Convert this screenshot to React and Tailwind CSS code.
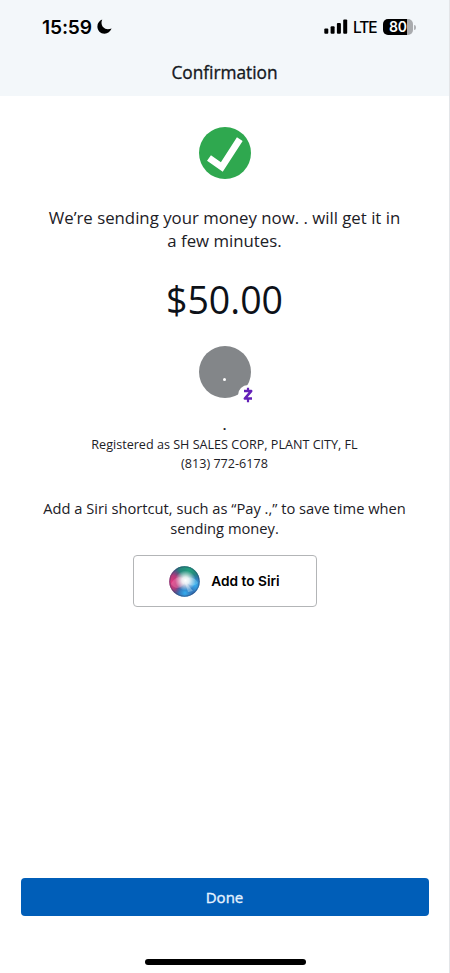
import { useState } from "react";

function StatusBar() {
  return (
    <div className="flex h-[54px] items-center justify-between pl-[42px] pr-[33px]">
      <div className="flex items-center gap-[5px]">
        <span className="pt-px font-['Inter'] text-[19.2px] font-semibold leading-none tracking-[-0.15px]">15:59</span>
        <svg width="15" height="15" viewBox="0 0 16 16" fill="#000">
          <path d="M5.6 0.6C5 1.8 4.8 3 4.8 4.1C4.8 8.1 7.8 10.9 11.6 10.9C13 10.9 14.2 10.7 15.6 10.1C14.2 13.4 11.4 15.6 8 15.6C3.7 15.6 0.4 12.3 0.4 7.9C0.4 4.6 2.6 1.7 5.6 0.6Z" />
        </svg>
      </div>
      <div className="flex items-center">
        <svg width="24" height="16" viewBox="0 0 24 16" fill="#000">
          <rect x="0.3" y="9.5" width="4" height="5.3" rx="1" />
          <rect x="6.6" y="7.2" width="4" height="7.6" rx="1" />
          <rect x="12.9" y="4" width="4" height="10.8" rx="1" />
          <rect x="19.2" y="0.6" width="4" height="14.2" rx="1" />
        </svg>
        <span className="ml-[5px] w-[23px] whitespace-nowrap pt-px font-['Inter'] text-[15.5px] font-medium leading-none tracking-[-1.1px]">LTE</span>
        <div className="ml-[7px] flex h-4 w-[30px] items-center justify-center overflow-hidden rounded-[5px] bg-[linear-gradient(90deg,#000_80%,#a9abae_80%)] font-['Inter'] text-[14px] font-semibold leading-none text-white">
          80
        </div>
        <div className="ml-px h-[5px] w-[2px] rounded-r-full bg-[#b0b2b5]" />
      </div>
    </div>
  );
}

function SiriIcon() {
  return (
    <svg width="31" height="31" viewBox="0 0 31 31">
      <defs>
        <clipPath id="orb">
          <circle cx="15.5" cy="15.5" r="15.2" />
        </clipPath>
        <radialGradient id="pink">
          <stop offset="0" stopColor="#e0387f" />
          <stop offset="0.5" stopColor="#c93678" stopOpacity="0.85" />
          <stop offset="1" stopColor="#a02f70" stopOpacity="0" />
        </radialGradient>
        <radialGradient id="green">
          <stop offset="0" stopColor="#22a080" />
          <stop offset="0.6" stopColor="#1f8c78" stopOpacity="0.85" />
          <stop offset="1" stopColor="#187866" stopOpacity="0" />
        </radialGradient>
        <radialGradient id="blue">
          <stop offset="0" stopColor="#35aef0" />
          <stop offset="0.5" stopColor="#2c90d8" stopOpacity="0.7" />
          <stop offset="1" stopColor="#2268b8" stopOpacity="0" />
        </radialGradient>
        <radialGradient id="glow">
          <stop offset="0" stopColor="#fff" />
          <stop offset="0.35" stopColor="#fff" stopOpacity="0.85" />
          <stop offset="1" stopColor="#fff" stopOpacity="0" />
        </radialGradient>
      </defs>
      <g clipPath="url(#orb)">
        <rect width="31" height="31" fill="#4a5a90" />
        <circle cx="20" cy="4" r="15" fill="url(#green)" />
        <circle cx="3" cy="16" r="13" fill="url(#pink)" />
        <circle cx="26" cy="19" r="12" fill="url(#blue)" />
        <circle cx="16" cy="27" r="10" fill="url(#blue)" />
        <path d="M2 18C5 11 12 9 17 14C14 22 7 25 2 18Z" fill="#f49ac4" opacity="0.3" />
        <path d="M15 14C20 9 27 12 29 17C25 21 19 20 15 14Z" fill="#8be3f8" opacity="0.35" />
        <path d="M15 14L24 25L19 26Z" fill="#c9e8fb" opacity="0.4" />
        <ellipse cx="16.5" cy="14.5" rx="10.5" ry="10" fill="url(#glow)" />
        <circle cx="15.5" cy="15.5" r="14.7" fill="none" stroke="#263a55" strokeOpacity="0.35" />
      </g>
    </svg>
  );
}

function Avatar() {
  return (
    <div className="relative mt-[23px] flex size-[52px] items-center justify-center rounded-full bg-[#838689]">
      <span className="mt-[14px] size-[3px] rounded-full bg-white" />
      {/* Zelle badge */}
      <div className="absolute left-[39px] top-[39px] flex size-5 items-center justify-center rounded-full bg-white">
        <svg width="10" height="16" viewBox="0 0 10 16" fill="none" stroke="#6420b8">
          <path d="M1 4.1H8.2L1.8 11.6H9" strokeWidth="2.5" strokeLinejoin="round" />
          <path d="M5 0.8V4M5 11.7V15.2" strokeWidth="2.2" />
        </svg>
      </div>
    </div>
  );
}

function App() {
  const [siriAdded, setSiriAdded] = useState(false);

  return (
    <div className="flex h-[973px] w-[450px] flex-col border-r border-[#e3e5e8] bg-white font-['Open_Sans',sans-serif] text-[#1c2026]">
      {/* Header */}
      <header className="h-24 bg-[#f3f7fa] text-black">
        <StatusBar />
        <h1 className="text-center text-[17.3px] leading-[38px] text-[#15181d] [-webkit-text-stroke:0.35px_#15181d]">Confirmation</h1>
      </header>

      {/* Main Content */}
      <main className="flex flex-1 flex-col items-center whitespace-nowrap pt-[31px] text-center">
        <svg width="52" height="52" viewBox="0 0 52 52">
          <circle cx="26" cy="26" r="26" fill="#2fa84f" />
          <path d="M10 31L22.8 40L40.8 12.2" fill="none" stroke="#fff" strokeWidth="6.8" />
        </svg>

        <p className="mt-[27px] text-[16.8px] leading-[23px]">
          We’re sending your money now. . will get it in
          <br />
          a few minutes.
        </p>

        <p className="mt-[25px] text-[37.5px] leading-[46px] text-[#0d1118]">$50.00</p>

        <Avatar />

        <p className="mt-[17px] text-[15px] font-semibold leading-[19px]">.</p>
        <p className="mt-px text-[12.6px] leading-[19px]">
          Registered as SH SALES CORP, PLANT CITY, FL
          <br />
          (813) 772-6178
        </p>

        <p className="mt-[25px] text-[14.7px] leading-5">
          Add a Siri shortcut, such as “Pay .,” to save time when
          <br />
          sending money.
        </p>

        <button
          onClick={() => setSiriAdded(!siriAdded)}
          className="mt-[17px] flex h-[52px] w-[184px] items-center justify-center gap-[11px] rounded-[4px] border border-[#b3b5b7] font-['Inter'] text-[13.7px] font-semibold text-black"
        >
          <SiriIcon />
          <span className="pt-px">Add to Siri</span>
        </button>
      </main>

      {/* Footer */}
      <footer className="flex flex-col items-center pb-2">
        <button className="h-[38px] w-[408px] rounded-[4px] bg-[#005eb8] text-[15px] text-[#e5f2ff] [-webkit-text-stroke:0.35px_#e5f2ff]">
          Done
        </button>
        <div className="mt-[43px] ml-px h-[6px] w-[161px] rounded-full bg-black" />
      </footer>
    </div>
  );
}

export default App;
